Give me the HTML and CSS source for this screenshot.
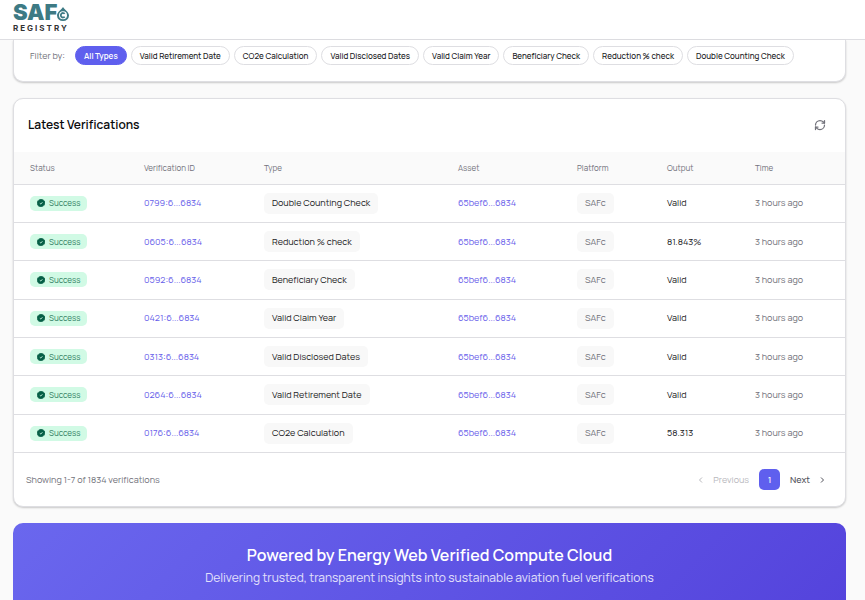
FILE: index.html
```html
<!DOCTYPE html>
<html lang="en">
<head>
    <meta charset="UTF-8">
    <meta name="viewport" content="width=device-width, initial-scale=1.0">
    <title>SAFc Registry</title>
    <link rel="stylesheet" href="styles.css">
</head>
<body>
    <!-- Shared icons -->
    <svg width="0" height="0" class="sprite" aria-hidden="true">
        <symbol id="check" viewBox="0 0 24 24">
            <path d="M12 0l3 1 3.600.4 1.800 3.200 3.200 1.600.2 3.600L24 12l-.6 3-.2 3.600-3.200 1.200-1.800 3-3.400.4L12 24l-3-.6-3.600-.2-1.600-3.200L.6 18l.2-3.600L0 12l.6-3L1 5.600l3.200-1.400L6 1.400l3.200-.4z" fill="#065f46"/>
            <path d="M8.500 13l2.500 2 5-5" fill="none" stroke="#d1fae5" stroke-width="3"/>
        </symbol>
    </svg>

    <header class="header">
        <a class="logo" href="#" aria-label="SAFc Registry">
            <span class="logo-top">SAF<svg class="drop" viewBox="0 0 24 28">
                <path d="M12 0C14 4 24 10 24 17a12 11 0 0 1-24 0C0 10 10 4 12 0z" fill="#3d7a84"/>
                <circle cx="12" cy="16.500" r="8" fill="#fff"/>
                <path d="M15.500 13.500a4.500 4.500 0 1 0 0 6" fill="none" stroke="#3d7a84" stroke-width="3.500"/>
            </svg></span>
            <span class="logo-bottom">REGISTRY</span>
        </a>
    </header>

    <main class="content">
        <section class="card filters">
            <span class="filter-label">Filter by:</span>
            <button class="chip active">All Types</button>
            <button class="chip">Valid Retirement Date</button>
            <button class="chip">CO2e Calculation</button>
            <button class="chip">Valid Disclosed Dates</button>
            <button class="chip">Valid Claim Year</button>
            <button class="chip">Beneficiary Check</button>
            <button class="chip">Reduction % check</button>
            <button class="chip">Double Counting Check</button>
        </section>

        <section class="card">
            <div class="card-header">
                <h2>Latest Verifications</h2>
                <button class="refresh" aria-label="Refresh">
                    <svg viewBox="0 0 24 24" fill="none" stroke="currentColor" stroke-width="2.500" stroke-linecap="round" stroke-linejoin="round">
                        <path d="M3 12a9 9 0 0 1 9-9 9.750 9.750 0 0 1 6.740 2.740L21 8"/>
                        <path d="M21 3v5h-5"/>
                        <path d="M21 12a9 9 0 0 1-9 9 9.750 9.750 0 0 1-6.740-2.740L3 16"/>
                        <path d="M8 16H3v5"/>
                    </svg>
                </button>
            </div>

            <table class="table">
                <colgroup>
                    <col class="col-status"><col class="col-id"><col class="col-type"><col class="col-asset">
                    <col class="col-platform"><col class="col-output"><col class="col-time">
                </colgroup>
                <thead>
                    <tr>
                        <th>Status</th><th>Verification ID</th><th>Type</th><th>Asset</th>
                        <th>Platform</th><th>Output</th><th>Time</th>
                    </tr>
                </thead>
                <tbody>
                    <tr>
                        <td><span class="status"><svg><use href="#check"/></svg>Success</span></td>
                        <td><a href="#">0799:6...6834</a></td>
                        <td><span class="tag">Double Counting Check</span></td>
                        <td><a href="#">65bef6...6834</a></td>
                        <td><span class="tag platform">SAFc</span></td>
                        <td>Valid</td>
                        <td class="time">3 hours ago</td>
                    </tr>
                    <tr>
                        <td><span class="status"><svg><use href="#check"/></svg>Success</span></td>
                        <td><a href="#">0605:6...6834</a></td>
                        <td><span class="tag">Reduction % check</span></td>
                        <td><a href="#">65bef6...6834</a></td>
                        <td><span class="tag platform">SAFc</span></td>
                        <td>81.843%</td>
                        <td class="time">3 hours ago</td>
                    </tr>
                    <tr>
                        <td><span class="status"><svg><use href="#check"/></svg>Success</span></td>
                        <td><a href="#">0592:6...6834</a></td>
                        <td><span class="tag">Beneficiary Check</span></td>
                        <td><a href="#">65bef6...6834</a></td>
                        <td><span class="tag platform">SAFc</span></td>
                        <td>Valid</td>
                        <td class="time">3 hours ago</td>
                    </tr>
                    <tr>
                        <td><span class="status"><svg><use href="#check"/></svg>Success</span></td>
                        <td><a href="#">0421:6...6834</a></td>
                        <td><span class="tag">Valid Claim Year</span></td>
                        <td><a href="#">65bef6...6834</a></td>
                        <td><span class="tag platform">SAFc</span></td>
                        <td>Valid</td>
                        <td class="time">3 hours ago</td>
                    </tr>
                    <tr>
                        <td><span class="status"><svg><use href="#check"/></svg>Success</span></td>
                        <td><a href="#">0313:6...6834</a></td>
                        <td><span class="tag">Valid Disclosed Dates</span></td>
                        <td><a href="#">65bef6...6834</a></td>
                        <td><span class="tag platform">SAFc</span></td>
                        <td>Valid</td>
                        <td class="time">3 hours ago</td>
                    </tr>
                    <tr>
                        <td><span class="status"><svg><use href="#check"/></svg>Success</span></td>
                        <td><a href="#">0264:6...6834</a></td>
                        <td><span class="tag">Valid Retirement Date</span></td>
                        <td><a href="#">65bef6...6834</a></td>
                        <td><span class="tag platform">SAFc</span></td>
                        <td>Valid</td>
                        <td class="time">3 hours ago</td>
                    </tr>
                    <tr>
                        <td><span class="status"><svg><use href="#check"/></svg>Success</span></td>
                        <td><a href="#">0176:6...6834</a></td>
                        <td><span class="tag">CO2e Calculation</span></td>
                        <td><a href="#">65bef6...6834</a></td>
                        <td><span class="tag platform">SAFc</span></td>
                        <td>58.313</td>
                        <td class="time">3 hours ago</td>
                    </tr>
                </tbody>
            </table>

            <div class="card-footer">
                <span>Showing 1-7 of 1834 verifications</span>
                <nav class="pagination" aria-label="Pagination">
                    <button class="page-link" disabled>
                        <svg viewBox="0 0 10 10"><path d="M6 2.500L3.500 5 6 7.500"/></svg>
                        Previous
                    </button>
                    <button class="page-current" aria-current="page">1</button>
                    <button class="page-link">
                        Next
                        <svg viewBox="0 0 10 10"><path d="M4 2.500L6.500 5 4 7.500"/></svg>
                    </button>
                </nav>
            </div>
        </section>

        <section class="banner">
            <h2>Powered by Energy Web Verified Compute Cloud</h2>
            <p>Delivering trusted, transparent insights into sustainable aviation fuel verifications</p>
        </section>
    </main>
</body>
</html>
```
FILE: styles.css
```css
* {
    margin: 0;
    padding: 0;
    box-sizing: border-box;
}

body {
    background-color: #fafafa;
    color: #18181b;
    font-family: Manrope, Inter, "Liberation Sans", sans-serif;
    font-size: 9px;
    line-height: 14px;
    height: 100vh;
    overflow: hidden;
}

button {
    border: none;
    background: none;
    color: inherit;
    font: inherit;
    cursor: pointer;
}

a {
    color: #6760ea;
    text-decoration: none;
}

.sprite {
    position: absolute;
}

/* Header */
.header {
    height: 40px;
    padding: 1px 13px;
    background-color: #ffffff;
    border-bottom: 1px solid #dedee2;
}

.logo {
    display: inline-flex;
    flex-direction: column;
    font-family: Inter, "Liberation Sans", sans-serif;
}

.logo-top {
    display: flex;
    align-items: flex-end;
    color: #3d7a84;
    font-size: 22px;
    font-weight: 900;
    line-height: 22px;
}

.drop {
    width: 12px;
    height: 14px;
    margin-bottom: 2px;
}

.logo-bottom {
    color: #333333;
    font-size: 8px;
    font-weight: 700;
    line-height: 10px;
    letter-spacing: 2px;
}

/* Cards */
.content {
    padding: 0 19px 0 13px;
}

.card {
    margin-bottom: 16px;
    background-color: #ffffff;
    border: 1px solid #dedee2;
    border-radius: 10px;
    box-shadow: 0 1px 2px rgba(0, 0, 0, 0.2);
}

.filters {
    display: flex;
    align-items: center;
    gap: 4px;
    padding: 6px 16px 16px;
    border-top: none;
    border-radius: 0 0 10px 10px;
}

.filter-label {
    margin-right: 6px;
    color: #71717a;
}

.chip {
    height: 19px;
    padding: 0 8px;
    border: 1px solid #dedee2;
    border-radius: 10px;
    font-size: 8px;
    font-weight: 500;
    white-space: nowrap;
}

.chip.active {
    background-color: #5f5fee;
    border-color: #5f5fee;
    color: #ffffff;
    font-weight: 600;
}

.card-header {
    display: flex;
    align-items: center;
    justify-content: space-between;
    height: 53px;
    padding: 0 19px 2px 14px;
}

.card-header h2 {
    font-size: 12px;
    font-weight: 600;
    color: #09090b;
}

.refresh {
    display: flex;
    color: #71717a;
}

.refresh svg {
    width: 12px;
    height: 12px;
}

/* Table */
.table {
    width: 100%;
    height: 301px;
    table-layout: fixed;
    border-collapse: collapse;
}

.col-status { width: 114px; }
.col-id { width: 120px; }
.col-type { width: 194px; }
.col-asset { width: 119px; }
.col-platform { width: 90px; }
.col-output { width: 88px; }
.col-time { width: 106px; }

.table th,
.table td {
    padding: 0 16px;
    border-bottom: 1px solid #dedee2;
    text-align: left;
    white-space: nowrap;
}

.table th {
    height: 32px;
    background-color: #fafafa;
    color: #71717a;
    font-size: 8px;
    font-weight: 400;
}

.table td {
    height: 38px;
}

.table .time {
    color: #71717a;
}

.status {
    display: inline-flex;
    align-items: center;
    gap: 4px;
    height: 15px;
    padding: 0 7px;
    background-color: #d1fae5;
    border-radius: 5px;
    color: #2f7d61;
    font-size: 8px;
    vertical-align: middle;
}

.status svg {
    width: 8px;
    height: 8px;
}

.tag {
    display: inline-flex;
    align-items: center;
    height: 21px;
    padding: 0 8px;
    background-color: #f8f8f8;
    border-radius: 5px;
    vertical-align: middle;
}

.platform {
    color: #71717a;
}

/* Pagination */
.card-footer {
    display: flex;
    align-items: center;
    justify-content: space-between;
    height: 53px;
    padding: 0 18px 0 12px;
    color: #71717a;
}

.pagination {
    display: flex;
    align-items: center;
    gap: 10px;
}

.page-link {
    display: flex;
    align-items: center;
    gap: 7px;
    color: #52525b;
    font-weight: 500;
}

.page-link:disabled {
    color: #b8b8bd;
    font-weight: 400;
    cursor: default;
}

.page-link svg {
    width: 10px;
    height: 10px;
    fill: none;
    stroke: currentColor;
    stroke-width: 1;
}

.page-current {
    width: 21px;
    height: 21px;
    background-color: #5f5fee;
    border-radius: 5px;
    color: #ffffff;
    font-weight: 500;
}

/* Banner */
.banner {
    padding: 20px 16px 24px;
    background: linear-gradient(135deg, #6a67ee, #5443dc);
    border-radius: 10px;
    color: #ffffff;
    text-align: center;
}

.banner h2 {
    font-size: 16px;
    font-weight: 600;
    line-height: 24px;
}

.banner p {
    color: #e3e1fb;
    font-size: 12px;
    line-height: 22px;
}
```
